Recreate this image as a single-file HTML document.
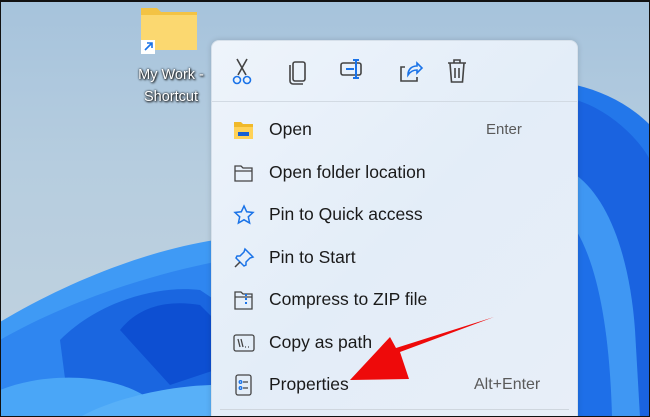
<!DOCTYPE html>
<html style="width:650px;height:417px;overflow:hidden"><head><style>
body{margin:0;width:650px;height:417px;overflow:hidden;position:relative;font-family:"Liberation Sans",sans-serif;background:linear-gradient(180deg,#a6c3dc 0%,#b6cddf 40%,#c3d3df 100%);}
.frame{position:absolute;inset:0;border:1px solid #111;border-top:2px solid #111;box-sizing:border-box;pointer-events:none;z-index:9}
.menu{position:absolute;left:211px;top:40px;width:365px;height:390px;background:linear-gradient(135deg,#eef4fb,#e3edf8 50%,#e8eef8);border-radius:8px;box-shadow:0 0 6px rgba(0,0,0,.15);border:1px solid #d6e0ea}
.sep{position:absolute;left:0;right:0;top:60px;height:1px;background:#d2dae3}
.item{position:absolute;left:57px;font-size:17.5px;color:#1a1a1a;}
.sc{position:absolute;font-size:15px;color:#5a5a5a}
.ic{position:absolute;left:20px}
</style></head><body>
<svg width="650" height="417" style="position:absolute;left:0;top:0">
<path d="M0 322 C70 280 150 250 215 240 L215 417 L0 417Z" fill="#3f9af5"/>
<path d="M0 340 C70 300 150 275 215 262 L215 417 L0 417Z" fill="#2f86f0"/>
<path d="M60 340 C100 300 160 285 200 290 L215 300 L215 417 L70 417Z" fill="#1a66e0"/>
<path d="M120 330 C140 305 170 300 200 305 L215 320 L215 370 L170 385 Z" fill="#0d4fd2"/>
<path d="M0 390 C50 370 120 375 150 400 L155 417 L0 417Z" fill="#4aa6f7"/>
<path d="M80 417 C120 395 180 385 215 385 L215 417Z" fill="#58b0f8"/>
<path d="M576 85 C605 92 630 105 650 125 L650 417 L576 417Z" fill="#2377ea"/>
<path d="M576 100 C610 110 640 140 650 160 L650 417 L576 417Z" fill="#1a63e0"/>
<path d="M576 175 C610 200 630 260 635 330 L640 417 L576 417Z" fill="#3f97f3"/>
<path d="M576 230 C600 270 610 340 612 417 L576 417Z" fill="#1e6fe8"/>
</svg>
<svg width="70" height="50" style="position:absolute;left:136px;top:4px">
<path d="M5 4 h16 l4 4 h36 v38 h-56z" fill="#f3c344"/><rect x="5" y="11" width="56" height="35" fill="#fbd870"/>
<rect x="5" y="36" width="14" height="14" fill="#fff"/><path d="M9 46 l7 -7 M11 39 h5 v5" stroke="#1a73e8" stroke-width="1.6" fill="none"/>
</svg>
<div style="position:absolute;left:128px;top:64px;width:86px;text-align:center;color:#fff;font-size:14.5px;line-height:22px;text-shadow:0 0 2px #000,1px 1px 2px #000">My Work -<br>Shortcut</div>
<div class="menu">
<svg width="260" height="40" style="position:absolute;left:18px;top:12px" fill="none" stroke-width="1.6">
<g stroke="#444"><path d="M7 6 L16 22 M17 6 L8 22"/></g><circle cx="7" cy="27" r="3.5" stroke="#1a73e8"/><circle cx="17" cy="27" r="3.5" stroke="#1a73e8"/>
<rect x="63" y="9" width="12" height="19" rx="2" stroke="#444"/><path d="M60 12 v16 a3 3 0 0 0 3 3 h10" stroke="#444"/>
<rect x="111" y="10" width="20" height="12" rx="2" stroke="#444"/><path d="M116 16 h8 M126 7 v18 M123 7 h6 M123 25 h6" stroke="#1a73e8" stroke-width="2"/>
<path d="M175 14 h-4 v14 h16 v-4" stroke="#444"/><path d="M178 22 c0-6 4-9 9-9 v-3 l5 5 -5 5 v-3 c-4 0-7 2-9 5z" stroke="#1a73e8"/>
<path d="M218 10 h18 M224 10 v-3 h6 v3 M220 10 l1.5 19 h11 l1.5 -19 M225 15 v10 M229 15 v10" stroke="#444"/>
</svg>
<div class="sep"></div>
<svg class="ic" width="24" height="24" style="top:77px"><path d="M2 4 h7 l2 2 h10 v15 h-19z" fill="#f0b92a"/><rect x="2" y="9" width="19" height="12" fill="#ffd257"/><rect x="6" y="14" width="11" height="4" fill="#1560d4"/></svg>
<div class="item" style="top:78px">Open</div><div class="sc" style="left:274px;top:80px">Enter</div>
<svg class="ic" width="24" height="24" style="top:120px" fill="none" stroke="#444" stroke-width="1.3"><path d="M3 5 h6 l2 2 h9 v13 h-17z M3 10 h17"/></svg>
<div class="item" style="top:121px">Open folder location</div>
<svg class="ic" width="24" height="24" style="top:162px" fill="none" stroke="#1a73e8" stroke-width="1.5"><path d="M12 3 l2.7 5.8 6.3.7 -4.7 4.3 1.3 6.2 -5.6-3.2 -5.6 3.2 1.3-6.2 -4.7-4.3 6.3-.7z"/></svg>
<div class="item" style="top:163px">Pin to Quick access</div>
<svg class="ic" width="24" height="24" style="top:205px" fill="none" stroke-width="1.5"><path d="M13 3 l8 8 -3 1 -4 4 0 3 -2 1 -8 -8 1-2 3 0 4-4z" stroke="#1a73e8"/><path d="M8 16 l-5 5" stroke="#444"/></svg>
<div class="item" style="top:206px">Pin to Start</div>
<svg class="ic" width="24" height="24" style="top:247px" fill="none" stroke="#444" stroke-width="1.3"><path d="M3 4 h6 l2 2 h9 v15 h-17z M3 9 h17"/><path d="M14 6 v12" stroke="#1a73e8" stroke-dasharray="2 2" stroke-width="2"/></svg>
<div class="item" style="top:248px">Compress to ZIP file</div>
<svg class="ic" width="24" height="24" style="top:290px" fill="none" stroke="#444" stroke-width="1.3"><rect x="2" y="4" width="20" height="16" rx="2"/><path d="M6 8 l2 8 M9 8 l2 8 M13 16 h1 M16 16 h1"/></svg>
<div class="item" style="top:291px">Copy as path</div>
<svg class="ic" width="24" height="24" style="top:332px" fill="none" stroke="#444" stroke-width="1.3"><rect x="4" y="2" width="15" height="20" rx="2"/><circle cx="8.5" cy="9" r="1.3" stroke="#1a73e8"/><circle cx="8.5" cy="15" r="1.3" stroke="#1a73e8"/><path d="M11 9 h5 M11 15 h5"/></svg>
<div class="item" style="top:333px">Properties</div><div class="sc" style="left:262px;top:335px;font-size:16px">Alt+Enter</div>
<div style="position:absolute;left:8px;right:8px;top:368px;height:1px;background:#cfd6de"></div>
</div>
<svg width="650" height="417" style="position:absolute;left:0;top:0;z-index:5">
<path d="M494 317 L400 352 L409 379 L350 380 L390 337 L396 348 Z" fill="#ee0a0a"/>
</svg>
<div class="frame"></div>
</body></html>
